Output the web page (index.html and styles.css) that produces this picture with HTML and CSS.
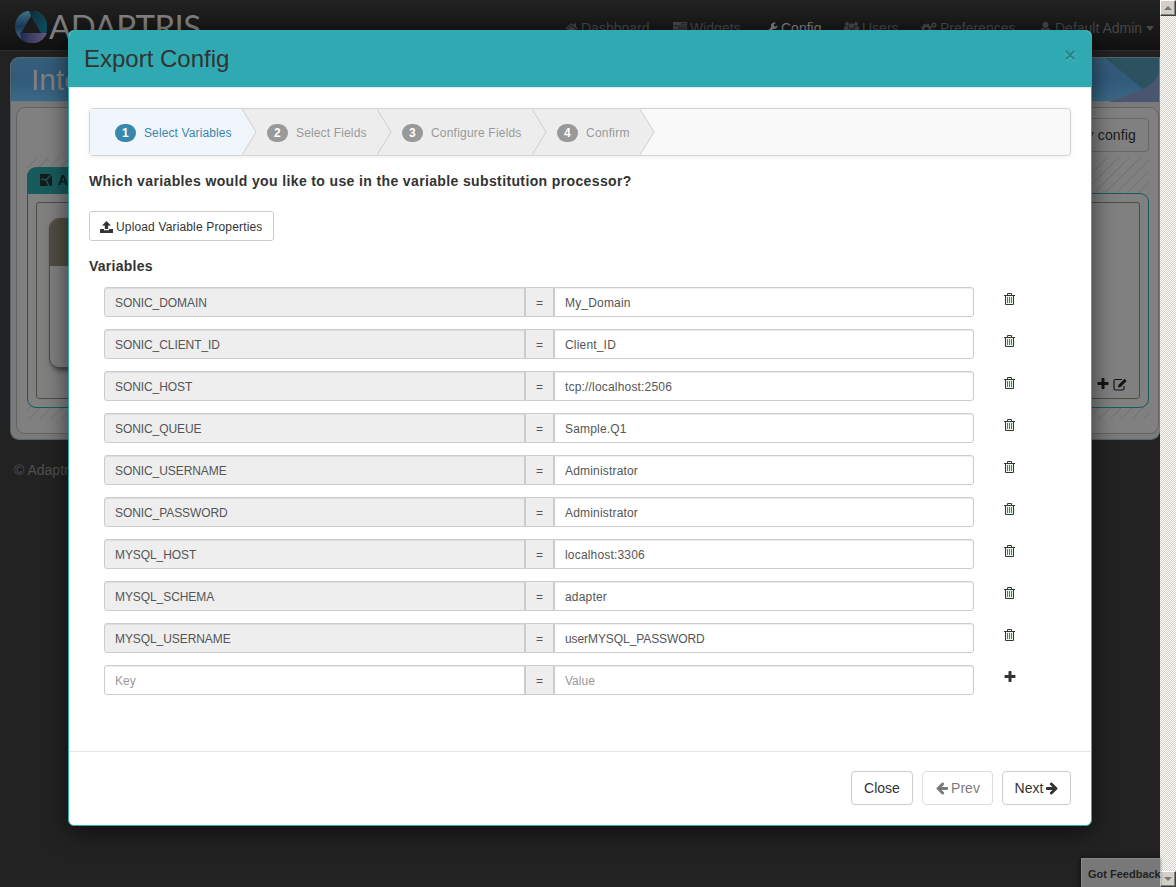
FILE: index.html
```html
<!DOCTYPE html>
<html lang="en">
<head>
<meta charset="utf-8">
<title>Export Config</title>
<link rel="stylesheet" href="styles.css">
</head>
<body>
<svg class="defs" width="0" height="0">
  <symbol id="plus" viewBox="0 0 1792 1792"><path d="M1600 736v192q0 40-28 68t-68 28h-416v416q0 40-28 68t-68 28h-192q-40 0-68-28t-28-68v-416h-416q-40 0-68-28t-28-68v-192q0-40 28-68t68-28h416v-416q0-40 28-68t68-28h192q40 0 68 28t28 68v416h416q40 0 68 28t28 68z"/></symbol>
  <symbol id="left" viewBox="0 0 1792 1792"><path d="M1664 896v128q0 53-32.500 90.500t-84.500 37.500h-704l293 294q38 36 38 90t-38 90l-75 76q-37 37-90 37-52 0-91-37l-651-652q-37-37-37-90 0-52 37-91l651-650q38-38 91-38 52 0 90 38l75 74q38 38 38 91t-38 91l-293 293h704q52 0 84.500 37.500t32.500 90.500z"/></symbol>
  <symbol id="trash" viewBox="0 0 11 12"><path d="M2 3h7v8H2z" fill="#e9f5ea"/><path d="M0 2.500h11M3.500 2V.5h4V2M1.500 3v8.500h8V3" fill="none" stroke="#2c3a30"/><path d="M3.500 4v6M5.500 4v6M7.500 4v6" fill="none" stroke="#3f8a4c"/></symbol>
</svg>
<div class="window">
  <div class="page">
    <header class="navbar">
      <div class="brand">
        <svg width="32" height="32" viewBox="0 0 32 32">
          <defs>
            <linearGradient id="ga" x1="0" y1="0" x2="0" y2="1"><stop offset="0" stop-color="#437184"/><stop offset=".5" stop-color="#173a58"/><stop offset="1" stop-color="#4a7389"/></linearGradient>
            <linearGradient id="gb" x1="0" y1="0" x2="1" y2="1"><stop offset="0" stop-color="#102c3c"/><stop offset="1" stop-color="#0a5260"/></linearGradient>
            <linearGradient id="gc" x1="0" y1="0" x2="1" y2="0"><stop offset="0" stop-color="#1f2a52"/><stop offset="1" stop-color="#66587b"/></linearGradient>
          </defs>
          <circle cx="16" cy="15.500" r="16" fill="url(#ga)"/>
          <path d="M14 0a16 16 0 0 1 17 22L26 22 16 5z" fill="url(#gb)"/>
          <path d="M5 22h27A16 16 0 0 1 6 28z" fill="url(#gc)"/>
          <path d="M16 5l10 17H6z" fill="#1b1b1b"/>
        </svg>
        <span class="wordmark">ADAPTRIS</span>
      </div>
      <nav class="menu">
        <a><svg width="13" height="12" viewBox="0 0 13 12"><path d="M6.500 1L0 6.500l.8.900L6.500 2.800l5.700 4.600.8-.9-2-1.700V1.500H9.200v1.700zM2 7.500V12h3.500V9h2v3H11V7.500L6.500 4z"/></svg>Dashboard</a>
        <a><svg width="14" height="12" viewBox="0 0 14 12"><path fill-rule="evenodd" d="M0 0h14v3.400H0zM8 1.200v1h5v-1zM0 4.300h14v3.400H0zM5 5.500v1h8v-1zM0 8.600h14V12H0z"/></svg>Widgets</a>
        <a class="current"><svg width="11" height="12" viewBox="0 0 12 12"><path d="M11.500 3.200L9.300 4.500 7.600 3.600V1.800L9.800.5A3.600 3.600 0 0 0 4.700 5L.5 9.200a1.400 1.400 0 0 0 2 2L6.800 7a3.600 3.600 0 0 0 4.700-3.800z"/></svg>Config</a>
        <a><svg width="15" height="12" viewBox="0 0 15 12"><circle cx="3" cy="2" r="2"/><circle cx="12" cy="2" r="2"/><circle cx="7.500" cy="4" r="2.700"/><path d="M0 4.500h4l1 3-1.500 1H0zM15 4.500h-4l-1 3 1.500 1H15zM3 12V9q1-2 2.500-2l2 1 2-1Q11 7 12 9v3z"/></svg>Users</a>
        <a><svg width="16" height="13" viewBox="0 0 16 13"><circle cx="5.500" cy="7" r="3.300" fill="none" stroke="currentColor" stroke-width="2.400"/><circle cx="5.500" cy="7" r="4.900" fill="none" stroke="currentColor" stroke-width="1.500" stroke-dasharray="2 1.850"/><circle cx="13" cy="3" r="1.800" fill="none" stroke="currentColor" stroke-width="1.600"/><circle cx="13" cy="10" r="1.800" fill="none" stroke="currentColor" stroke-width="1.600"/></svg>Preferences</a>
        <a><svg width="11" height="12" viewBox="0 0 11 12"><circle cx="5.500" cy="3" r="3"/><path d="M0 12V9q1-3 3-3l2.500 1L8 6q2 0 3 3v3z"/></svg>Default Admin<i class="caret"></i></a>
      </nav>
    </header>
    <main class="panel">
      <div class="panel-head"><h1>Inte</h1>
        <svg width="70" height="44" viewBox="0 0 70 44"><path d="M16 0l38 31Q66 26 70 14V0z" fill="#2c5160"/><path d="M20 44l34-13Q66 26 70 14v30z" fill="#4a566f"/></svg>
      </div>
      <div class="panel-body">
        <div class="tools"><span class="config-btn">y config</span></div>
        <div class="hatch">
          <div class="tab"><svg width="12" height="12" viewBox="0 0 12 12"><path d="M0 0h12v12H0z" fill="#151b1b"/><path d="M1 5l5 1L12 0M6 6l3 6" stroke="#1a595b" stroke-width="1.500" fill="none"/></svg>A</div>
          <div class="adapter">
            <div class="channel">
              <div class="card"><div class="card-head"></div></div>
              <div class="channel-tools"><svg width="14" height="14"><use href="#plus"/></svg><svg width="14" height="13" viewBox="0 0 14 13"><path d="M9 1.500H2.500Q1 1.500 1 3v7.500Q1 12 2.500 12h7q1.500 0 1.500-1.500V8" fill="none" stroke="#151515" stroke-width="1.200"/><path d="M5 9.500l.4-2.600L11.500.8l2.200 2.200-6.100 6.100z"/></svg></div>
            </div>
          </div>
        </div>
      </div>
    </main>
    <footer class="copyright">© Adaptris</footer>
    <section class="modal">
      <div class="modal-head"><h2>Export Config</h2><span class="close">×</span></div>
      <div class="modal-body">
        <ol class="wizard">
          <li class="step s1 active"><b>1</b>Select Variables<svg width="15" height="46"><path d="M0 0l14 23L0 46"/></svg></li>
          <li class="step s2"><b>2</b>Select Fields<svg width="15" height="46"><path d="M0 0l14 23L0 46"/></svg></li>
          <li class="step s3"><b>3</b>Configure Fields<svg width="15" height="46"><path d="M0 0l14 23L0 46"/></svg></li>
          <li class="step s4"><b>4</b>Confirm<svg width="15" height="46"><path d="M0 0l14 23L0 46"/></svg></li>
        </ol>
        <p class="question">Which variables would you like to use in the variable substitution processor?</p>
        <button class="upload"><svg width="13" height="12" viewBox="0 0 13 12"><path d="M6.500 0L11 4.500H8.200V8H4.800V4.500H2zM0 8h4v1.200h5V8h4v4H0z"/></svg>Upload Variable Properties</button>
        <p class="label">Variables</p>
        <div class="rows">
          <div class="row"><span class="key">SONIC_DOMAIN</span><span class="eq">=</span><span class="val">My_Domain</span><svg class="act" width="11" height="12"><use href="#trash"/></svg></div>
          <div class="row"><span class="key">SONIC_CLIENT_ID</span><span class="eq">=</span><span class="val">Client_ID</span><svg class="act" width="11" height="12"><use href="#trash"/></svg></div>
          <div class="row"><span class="key">SONIC_HOST</span><span class="eq">=</span><span class="val">tcp://localhost:2506</span><svg class="act" width="11" height="12"><use href="#trash"/></svg></div>
          <div class="row"><span class="key">SONIC_QUEUE</span><span class="eq">=</span><span class="val">Sample.Q1</span><svg class="act" width="11" height="12"><use href="#trash"/></svg></div>
          <div class="row"><span class="key">SONIC_USERNAME</span><span class="eq">=</span><span class="val">Administrator</span><svg class="act" width="11" height="12"><use href="#trash"/></svg></div>
          <div class="row"><span class="key">SONIC_PASSWORD</span><span class="eq">=</span><span class="val">Administrator</span><svg class="act" width="11" height="12"><use href="#trash"/></svg></div>
          <div class="row"><span class="key">MYSQL_HOST</span><span class="eq">=</span><span class="val">localhost:3306</span><svg class="act" width="11" height="12"><use href="#trash"/></svg></div>
          <div class="row"><span class="key">MYSQL_SCHEMA</span><span class="eq">=</span><span class="val">adapter</span><svg class="act" width="11" height="12"><use href="#trash"/></svg></div>
          <div class="row"><span class="key">MYSQL_USERNAME</span><span class="eq">=</span><span class="val upper">userMYSQL_PASSWORD</span><svg class="act" width="11" height="12"><use href="#trash"/></svg></div>
          <div class="row blank"><span class="key">Key</span><span class="eq">=</span><span class="val">Value</span><svg class="add" width="14" height="14"><use href="#plus"/></svg></div>
        </div>
      </div>
      <div class="modal-foot">
        <button class="btn b-close">Close</button>
        <button class="btn b-prev"><svg width="14" height="14"><use href="#left"/></svg>Prev</button>
        <button class="btn b-next">Next<svg class="flip" width="14" height="14"><use href="#left"/></svg></button>
      </div>
    </section>
  </div>
  <div class="scrollbar"><span><i class="up"></i></span><span><i class="down"></i></span></div>
  <div class="feedback">Got Feedback</div>
</div>
</body>
</html>
```
FILE: styles.css
```css
* { box-sizing: border-box; }
body { margin: 0; background: #222; font: 14px/20px "Liberation Sans", Arial, sans-serif; color: #333; }
h1, h2, p, ol { margin: 0; padding: 0; font-weight: normal; }
svg { flex: none; fill: currentColor; }
.defs { position: absolute; }
.window { position: relative; display: flex; width: 1176px; height: 887px; overflow: hidden; }
.page { position: relative; width: 1160px; height: 887px; overflow: hidden; }

.navbar { display: flex; justify-content: space-between; height: 51px; background: linear-gradient(#222, #111); border-bottom: 1px solid #2b2b2b; }
.brand { display: flex; gap: 2px; padding: 11px 0 0 15px; color: #808080; }
.wordmark { font: 400 33px/31px Lato, sans-serif; letter-spacing: -0.6px; }
.menu { display: grid; grid-template-columns: 108px 94px 77px 77px 119px 120px; height: 50px; padding-top: 18px; color: #474747; }
.menu a { display: flex; align-items: center; gap: 3px; height: 20px; white-space: nowrap; }
.menu a:last-child { gap: 4px; }
.menu .current { color: #808080; }
.caret { border: 4px solid transparent; border-top: 5px solid; border-bottom: 0; }

.panel { margin: 6px 0 0 10px; height: 383px; background: #7a7a7a; border: 1px solid #59656c; border-right-color: #777; border-radius: 9px 0 9px 9px; overflow: hidden; }
.panel-head { display: flex; justify-content: space-between; height: 44px; padding-left: 20px; background: linear-gradient(#365e7c, #315a7b 50%, #3c6885); border-bottom: 1px solid #687780; color: #808080; }
.panel-head h1 { font-size: 30px; line-height: 44px; }
.panel-body { height: 327px; margin: 5px 0 0 5px; padding: 10px 9px 10px 10px; background: #808080; border: 1px solid #636363; border-radius: 9px; }
.tools { display: flex; justify-content: flex-end; }
.config-btn { height: 34px; padding: 6px 12px; border: 1px solid #666; border-radius: 4px; color: #1a1a1a; letter-spacing: .15px; }
.hatch { margin-top: 5px; height: 262px; padding-top: 10px; background: repeating-linear-gradient(135deg, #808080 0 7.100px, #707070 7.100px 7.800px); }
.tab { display: flex; align-items: center; gap: 6px; width: 200px; height: 26px; padding-left: 13px; background: #185b5d; border-radius: 9px 9px 0 0; color: #151b1b; font-weight: bold; }
.adapter { height: 215px; padding: 8px; background: #808080; border: 1px solid #185b5d; border-radius: 0 9px 9px 9px; }
.channel { display: flex; justify-content: space-between; height: 197px; padding: 15px 12px 7px; border: 1px solid #4f4c42; border-radius: 3px; }
.card { width: 300px; height: 150px; background: #808080; border: 1px solid #4f4c42; border-radius: 10px; overflow: hidden; box-shadow: 2px 3px 5px #444; }
.card-head { height: 47px; background: #504d43; }
.channel-tools { display: flex; align-items: center; align-self: flex-end; gap: 3px; color: #151515; }
.copyright { padding: 20px 0 0 14px; color: #505050; }
.feedback { position: absolute; left: 1081px; top: 858px; width: 79px; height: 30px; padding: 5px 0 0 6px; background: #787878; border: 1px solid #888; border-right: 0; font-weight: bold; font-size: 11px; letter-spacing: 0; color: #222; white-space: nowrap; box-shadow: -1px 0 4px #111; }

.modal { position: absolute; left: 68px; top: 30px; width: 1024px; height: 796px; background: #fff; border: 1px solid #30aab2; border-radius: 6px; box-shadow: 0 5px 25px rgba(0,0,0,.6); overflow: hidden; }
.modal-head { display: flex; justify-content: space-between; height: 57px; padding: 14px 15px; background: #30aab2; border-bottom: 1px solid #d8eeee; }
.modal-head h2 { font-size: 24px; line-height: 28px; }
.close { font-weight: bold; font-size: 20px; line-height: 20px; color: #26888e; text-shadow: 0 1px #5fc0c6; }
.modal-body { height: 663px; padding: 20px; }
.wizard { display: flex; height: 48px; background: #f9f9f9; border: 1px solid #d4d4d4; border-radius: 4px; box-shadow: 0 1px 4px rgba(0,0,0,.08); list-style: none; }
.step { position: relative; display: flex; align-items: center; padding: 2px 0 0 25px; background: #ededed; color: #999; font-size: 12px; white-space: nowrap; }
.step b { width: 21px; height: 18px; margin: -1px 8px 0 0; border-radius: 9px; background: #999; color: #fff; text-align: center; line-height: 19px; }
.step svg { position: absolute; left: 100%; top: 0; fill: #ededed; stroke: #cfcfcf; }
.s1 { width: 152px; z-index: 4; letter-spacing: .12px; }
.s2 { width: 135px; z-index: 3; letter-spacing: .15px; }
.s3 { width: 155px; z-index: 2; letter-spacing: .2px; }
.s4 { width: 108px; z-index: 1; letter-spacing: .25px; }
.step.active { background: #f1f6fc; color: #3a87ad; }
.active b { background: #3a87ad; }
.active svg { fill: #f1f6fc; }
.question, .label { font-weight: bold; line-height: 20px; }
.question { margin-top: 15px; letter-spacing: .37px; }
.upload { display: flex; align-items: center; gap: 3px; width: 185px; height: 30px; margin-top: 20px; padding: 1px 10px 0; background: #fff; border: 1px solid #ccc; border-radius: 3px; font: 12px "Liberation Sans", sans-serif; color: #333; white-space: nowrap; letter-spacing: .15px; }
.label { margin-top: 15px; letter-spacing: .25px; }
.rows { display: grid; gap: 12px; padding: 11px 0 0 15px; }
.row { display: flex; height: 30px; font-size: 12px; line-height: 28px; color: #555; }
.key, .val { padding: 1px 10px 0; border: 1px solid #ccc; box-shadow: inset 0 1px 1px rgba(0,0,0,.075); }
.key { width: 421px; background: #eee; border-radius: 3px 0 0 3px; letter-spacing: -.08px; }
.eq { width: 29px; padding-top: 1px; background: #eee; border: 1px solid #ccc; text-align: center; }
.val { width: 420px; border-radius: 0 3px 3px 0; letter-spacing: .18px; }
.val.upper { letter-spacing: -.08px; }
.blank .key { background: #fff; }
.blank .key, .blank .val { color: #999; letter-spacing: 0; }
.act { margin: 6px 0 0 30px; }
.add { margin: 5px 0 0 28.500px; color: #333; }
.modal-foot { display: flex; justify-content: flex-end; gap: 9px; height: 74px; padding: 19px 20px; border-top: 1px solid #e5e5e5; }
.btn { display: flex; align-items: center; justify-content: center; gap: 2px; height: 34px; padding: 0; background: #fff; border: 1px solid #ccc; border-radius: 4px; font: 14px "Liberation Sans", sans-serif; color: #333; }
.b-close { width: 62px; }
.b-prev { width: 71px; opacity: .65; }
.b-next { width: 69px; padding-left: 1px; }
.flip { transform: scaleX(-1); }

.scrollbar { display: flex; flex-direction: column; justify-content: space-between; width: 16px; background: repeating-conic-gradient(#d4d0c8 0 25%, #fff 0 50%) 0 0 / 2px 2px; }
.scrollbar span { display: grid; place-items: center; height: 16px; background: #d4d0c8; border: 1px solid; border-color: #fff #404040 #404040 #fff; box-shadow: inset -1px -1px #808080; }
.scrollbar i { border: 4px solid transparent; }
.scrollbar .up { border-top: 0; border-bottom-color: #777; }
.scrollbar .down { border-bottom: 0; border-top-color: #777; }
```
